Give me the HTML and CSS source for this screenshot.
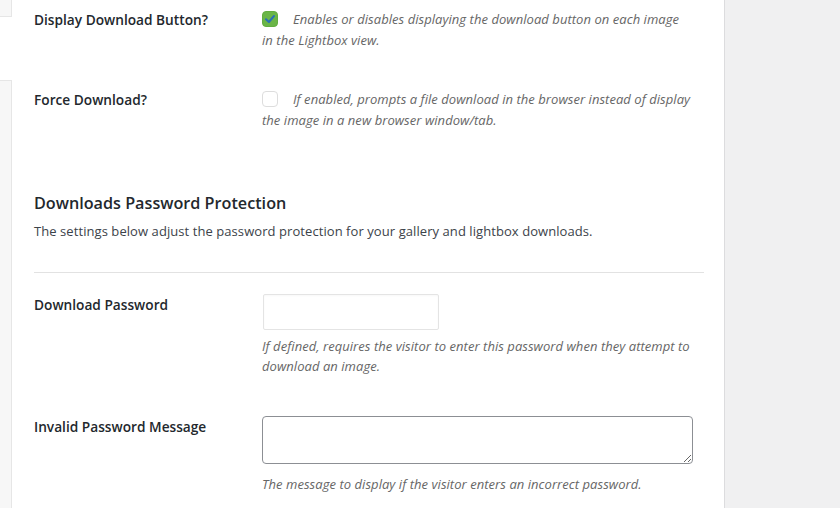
FILE: index.html
```html
<!DOCTYPE html>
<html>
<head>
<meta charset="utf-8">
<link rel="stylesheet" href="styles.css">
</head>
<body>
<div class="page">
  <div class="sidenav">
    <div class="tab tab-top"></div>
    <div class="tab tab-bottom"></div>
  </div>
  <div class="panel">
    <div class="row row-first">
      <div class="label">Display Download Button?</div>
      <div class="field">
        <p class="desc"><span class="check checked"><svg viewBox="0 0 16 16" width="16" height="16"><path d="M4 8.3 L6.9 11 L12 5" fill="none" stroke="#2a6fb5" stroke-width="2" stroke-linecap="round" stroke-linejoin="round"/></svg></span>Enables or disables displaying the download button on each image in the Lightbox view.</p>
      </div>
    </div>
    <div class="row row-second">
      <div class="label">Force Download?</div>
      <div class="field">
        <p class="desc"><span class="check"></span>If enabled, prompts a file download in the browser instead of display the image in a new browser window/tab.</p>
      </div>
    </div>

    <h3 class="section-title">Downloads Password Protection</h3>
    <p class="section-desc">The settings below adjust the password protection for your gallery and lightbox downloads.</p>
    <hr class="divider">

    <div class="row row-third">
      <div class="label">Download Password</div>
      <div class="field">
        <input class="text-input" type="text">
        <p class="desc desc-under">If defined, requires the visitor to enter this password when they attempt to download an image.</p>
      </div>
    </div>
    <div class="row row-fourth">
      <div class="label">Invalid Password Message</div>
      <div class="field">
        <textarea class="textarea"></textarea>
        <p class="desc desc-under desc-last">The message to display if the visitor enters an incorrect password.</p>
      </div>
    </div>
  </div>
  <div class="rest"></div>
</div>
</body>
</html>
```

FILE: styles.css
```css
* { box-sizing: border-box; }
html, body {
  margin: 0;
  padding: 0;
  background: #f1f1f1;
  height: 508px;
  overflow: hidden;
}
body {
  font-family: "Open Sans", "Noto Sans", sans-serif;
  color: #23282d;
}
.page {
  display: flex;
  height: 508px;
}
.sidenav {
  width: 12px;
  flex: none;
  background: #fff;
  display: flex;
  flex-direction: column;
}
.tab {
  background: #f7f7f7;
  border: 1px solid #e6e6e6;
  border-left: none;
}
.tab-top {
  height: 17px;
  border-top: none;
}
.tab-bottom {
  margin-top: 63px;
  flex: 1;
  border-bottom: none;
}
.panel {
  width: 713px;
  flex: none;
  background: #fff;
  border-right: 1px solid #dcdcde;
  padding: 0 20px 0 22px;
}
.rest {
  flex: 1;
  background: #f0f0f1;
}
.row {
  display: grid;
  grid-template-columns: 228px 1fr;
  align-items: start;
}
.row-first { margin-top: 9px; }
.row-second { margin-top: 38px; }
.row-third { margin-top: 21px; }
.row-fourth { margin-top: 40px; }
.label {
  font-size: 13.7px;
  font-weight: 600;
  line-height: 21px;
  color: #23282d;
}
.field { min-width: 0; }
.desc {
  margin: 0;
  font-size: 13px;
  font-style: italic;
  line-height: 21px;
  color: #666;
  letter-spacing: 0.05px;
  padding-right: 13px;
}
.desc-under {
  line-height: 20px;
  margin-top: 6px;
  padding-right: 0;
}
.desc-last { margin-top: 10px; }
.check {
  display: inline-block;
  width: 16px;
  height: 16px;
  border: 1px solid #dddddd;
  border-radius: 4px;
  background: #fff;
  vertical-align: -3px;
  margin-right: 15px;
}
.check svg { display: block; margin: -1px; }
.check.checked {
  background: #6ab547;
  border-color: #62ad40;
}
.section-title {
  margin: 61px 0 0;
  font-size: 16.2px;
  font-weight: 600;
  line-height: 22px;
  color: #23282d;
}
.section-desc {
  margin: 7px 0 0;
  font-size: 13px;
  line-height: 20px;
  letter-spacing: 0.07px;
  color: #3c434a;
}
.divider {
  margin: 31px 0 0;
  border: none;
  border-top: 1px solid #e2e2e2;
  height: 0;
}
.text-input {
  display: block;
  margin: 0 0 0 1px;
  width: 176px;
  height: 36px;
  border: 1px solid #e4e4e4;
  border-radius: 2px;
  box-shadow: inset 0 1px 2px rgba(0,0,0,0.03);
  background: #fff;
}
.textarea {
  display: block;
  margin: 0;
  width: 431px;
  height: 48px;
  border: 1px solid #8c8f94;
  border-radius: 4px;
  background: #fff;
  resize: both;
}
```
